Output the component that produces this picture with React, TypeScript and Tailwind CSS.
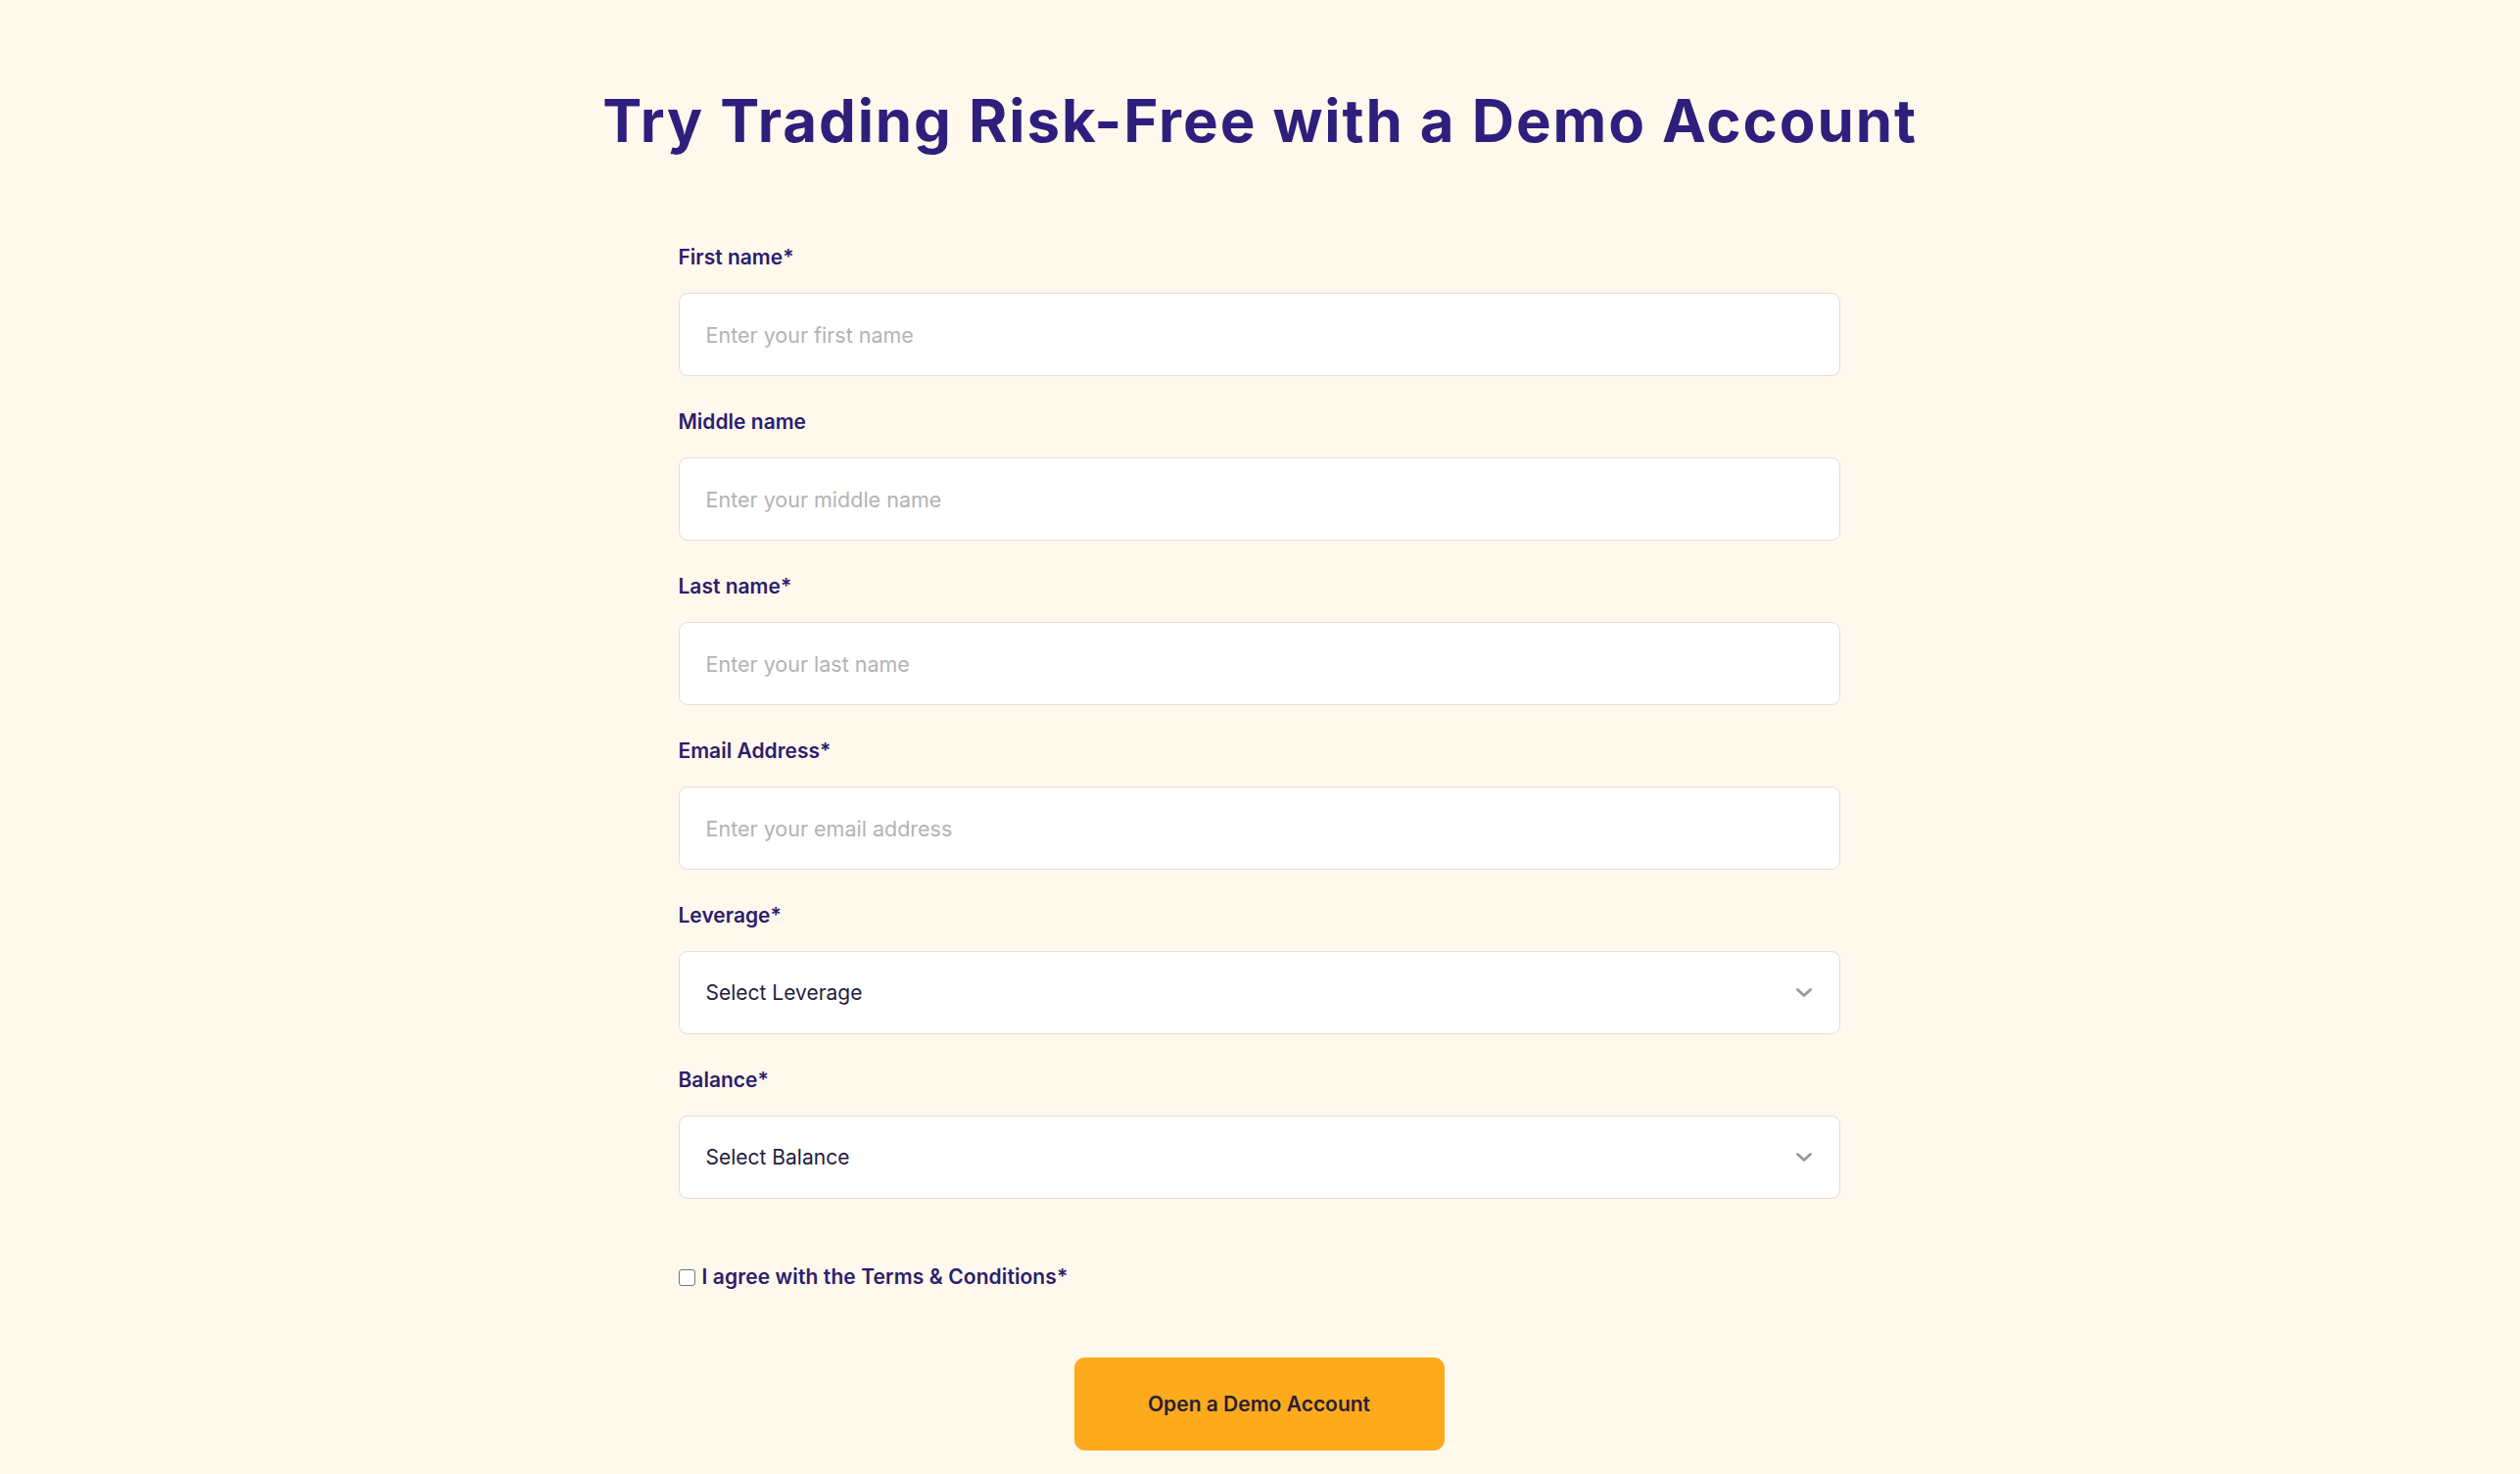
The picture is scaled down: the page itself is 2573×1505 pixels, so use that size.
import React from "react";

const fields = [
  { label: "First name*", placeholder: "Enter your first name", type: "text" },
  { label: "Middle name", placeholder: "Enter your middle name", type: "text" },
  { label: "Last name*", placeholder: "Enter your last name", type: "text" },
  { label: "Email Address*", placeholder: "Enter your email address", type: "email" },
];

const selects = [
  { label: "Leverage*", value: "Select Leverage" },
  { label: "Balance*", value: "Select Balance" },
];

function Chevron() {
  return (
    <svg width="20" height="13" viewBox="0 0 20 13" fill="none" className="shrink-0">
      <path d="M3.5 3.5 10 9.5l6.5-6" stroke="#9b9b9b" strokeWidth="3" strokeLinecap="round" strokeLinejoin="round" />
    </svg>
  );
}

export default function App() {
  return (
    <main
      className="min-h-screen bg-[#fff8ed] flex flex-col items-center pt-[88px] pb-10"
      style={{ fontFamily: "Inter, 'Noto Sans', sans-serif" }}
    >
      <h1 className="text-[60px] leading-[70px] font-bold text-[#2e1f7c] tracking-[1.9px]">
        Try Trading Risk-Free with a Demo Account
      </h1>

      <form className="w-[1186px] mt-[91px] mr-[2px] flex flex-col" onSubmit={(e) => e.preventDefault()}>
        {fields.map((f) => (
          <div key={f.label} className="flex flex-col mb-[33px]">
            <label className="text-[21px] leading-[28px] font-semibold text-[#2b1d6e] mb-[22px]">{f.label}</label>
            <input
              type={f.type}
              placeholder={f.placeholder}
              className="h-[85px] w-full bg-white border border-[#e6dbd8] rounded-[9px] px-[27px] text-[21.5px] text-[#1f1d3d] placeholder:text-[#b3b3b3] outline-none"
            />
          </div>
        ))}

        {selects.map((s) => (
          <div key={s.label} className="flex flex-col mb-[33px]">
            <label className="text-[21px] leading-[28px] font-semibold text-[#2b1d6e] mb-[22px]">{s.label}</label>
            <div className="h-[85px] w-full bg-white border border-[#e6dbd8] rounded-[9px] pl-[27px] pr-[26px] flex items-center justify-between">
              <span className="text-[21px] text-[#1f1d3d]">{s.value}</span>
              <Chevron />
            </div>
          </div>
        ))}

        <label className="flex items-center gap-[7px] mt-[35px] h-[24px]">
          <span className="w-[17px] h-[17px] rounded-[3px] border-[1.5px] border-[#767676] bg-white shrink-0" />
          <span className="text-[21px] font-semibold text-[#2b1d6e] tracking-[0.1px]">I agree with the Terms &amp; Conditions*</span>
        </label>

        <div className="flex justify-center mt-[70px]">
          <button
            type="submit"
            className="w-[378px] h-[95px] rounded-[11px] bg-[#fdaa1c] text-[21px] font-semibold text-[#2a1e36]"
          >
            Open a Demo Account
          </button>
        </div>
      </form>
    </main>
  );
}
